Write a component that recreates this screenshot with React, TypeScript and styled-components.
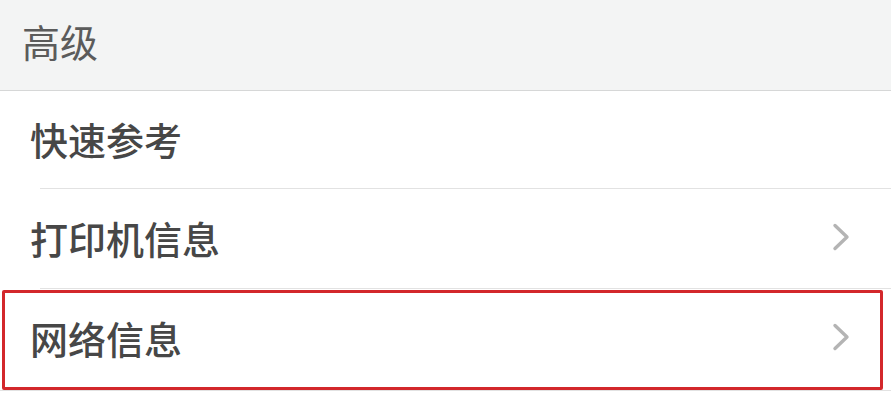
import React from "react";
import styled, { createGlobalStyle } from "styled-components";

const GlobalStyle = createGlobalStyle`
  html, body {
    margin: 0;
    padding: 0;
    background: #ffffff;
    font-family: "Noto Sans CJK SC", "Noto Sans", sans-serif;
  }
`;

type Item = {
  label: string;
  arrow?: boolean;
  highlighted?: boolean;
};

const items: Item[] = [
  { label: "快速参考" },
  { label: "打印机信息", arrow: true },
  { label: "网络信息", arrow: true, highlighted: true },
];

const Chevron = () => (
  <svg width="18" height="28" viewBox="0 0 18 28" fill="none">
    <path
      d="M3 2.5 L15 14 L3 25.5"
      stroke="#b4b4b4"
      strokeWidth="3.4"
      strokeLinecap="round"
      strokeLinejoin="round"
    />
  </svg>
);

export default function App() {
  return (
    <>
      <GlobalStyle />
      <Page>
        <SectionHeader>高级</SectionHeader>
        <List>
          {items.map((item) => (
            <Row key={item.label} $highlighted={item.highlighted}>
              <Label>{item.label}</Label>
              {item.arrow && <Chevron />}
            </Row>
          ))}
        </List>
      </Page>
    </>
  );
}

const Page = styled.div`
  width: 891px;
  height: 400px;
  overflow: hidden;
  background: #ffffff;
`;

const SectionHeader = styled.div`
  box-sizing: border-box;
  height: 91px;
  padding: 0 0 10px 22px;
  display: flex;
  align-items: center;
  background: #f3f4f4;
  border-bottom: 1px solid #d6d7d7;
  color: #5b5b5b;
  font-size: 38px;
  font-weight: 400;
`;

const List = styled.div`
  display: flex;
  flex-direction: column;
`;

const Row = styled.div<{ $highlighted?: boolean }>`
  position: relative;
  box-sizing: border-box;
  height: 100px;
  padding: 0 41px 4px 30px;
  display: flex;
  align-items: center;
  justify-content: space-between;

  &:first-child {
    height: 98px;
  }

  &:after {
    content: "";
    position: absolute;
    left: 40px;
    right: 0;
    bottom: 0;
    height: 1px;
    background: #e2e2e2;
  }

  &:last-child:after {
    left: 0;
    bottom: -2px;
  }

  &:before {
    content: ${(p) => (p.$highlighted ? '""' : "none")};
    position: absolute;
    top: 1px;
    left: 2px;
    right: 8px;
    bottom: -1px;
    border: 3px solid #d3272b;
    border-radius: 2px;
    z-index: 1;
  }
`;

const Label = styled.span`
  color: #474747;
  font-size: 38px;
  font-weight: 500;
`;
